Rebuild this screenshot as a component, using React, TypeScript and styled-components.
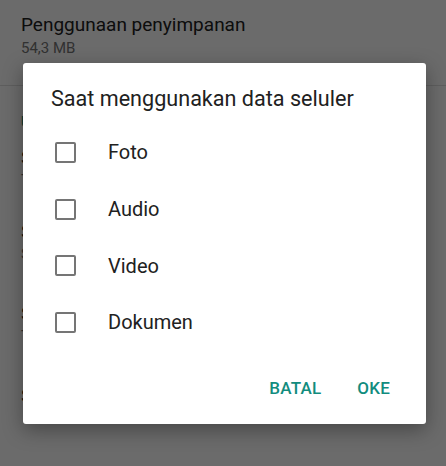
import React from 'react';
import styled, { createGlobalStyle } from 'styled-components';

const GlobalStyle = createGlobalStyle`
  html, body {
    margin: 0;
    padding: 0;
    width: 446px;
    height: 466px;
    overflow: hidden;
    font-family: Roboto, "Liberation Sans", sans-serif;
  }
`;

// Settings screen that sits behind the dim overlay
const Screen = styled.div`
  position: relative;
  width: 446px;
  height: 466px;
  background: #ffffff;
  overflow: hidden;
`;

const SettingItem = styled.div`
  padding: 13px 21px 0;
  display: flex;
  flex-direction: column;
  gap: 1px;
`;

const ItemTitle = styled.div`
  font-size: 19px;
  line-height: 24px;
  color: #212121;
`;

const ItemSub = styled.div`
  font-size: 15px;
  line-height: 20px;
  color: #757575;
`;

const Divider = styled.div`
  height: 1px;
  background: #e0e0e0;
  margin-top: 27px;
`;

const SectionHeader = styled.div`
  padding: 28px 21px 10px;
  font-size: 14px;
  font-weight: 500;
  color: #128c7e;
`;

const ListItem = styled.div<{ $gap?: number }>`
  padding: ${(p) => p.$gap ?? 18}px 21px 0;
  display: flex;
  flex-direction: column;
`;

const Overlay = styled.div`
  position: absolute;
  inset: 0;
  background: rgba(0, 0, 0, 0.58);
  display: flex;
  justify-content: center;
  align-items: flex-start;
  padding: 63px 20px 0 23px;
  box-sizing: border-box;
`;

const Dialog = styled.div`
  width: 403px;
  height: 361px;
  background: #ffffff;
  border-radius: 3px;
  box-shadow: 0 6px 20px rgba(0, 0, 0, 0.35);
  display: flex;
  flex-direction: column;
  box-sizing: border-box;
  padding: 22px 0 0;
`;

const DialogTitle = styled.div`
  padding: 0 28px;
  font-size: 21.6px;
  line-height: 28px;
  color: #212121;
`;

const Options = styled.div`
  display: flex;
  flex-direction: column;
  padding-top: 11px;
`;

const OptionRow = styled.label`
  display: flex;
  align-items: center;
  height: 56.7px;
  padding-left: 32px;
`;

const Box = styled.span`
  width: 17px;
  height: 17px;
  border: 2px solid #757575;
  border-radius: 2px;
  flex: none;
`;

const OptionLabel = styled.span`
  margin-left: 32px;
  font-size: 20px;
  color: #212121;
`;

const Actions = styled.div`
  margin-top: auto;
  display: flex;
  justify-content: flex-end;
  gap: 36px;
  padding: 0 36px 26px 0;
`;

const ActionButton = styled.button`
  border: none;
  background: none;
  padding: 0;
  font-family: inherit;
  font-size: 17px;
  font-weight: 500;
  letter-spacing: 0.2px;
  color: #128c7e;
`;

const options = ['Foto', 'Audio', 'Video', 'Dokumen'];

export default function App() {
  return (
    <>
      <GlobalStyle />
      <Screen>
        <SettingItem>
          <ItemTitle>Penggunaan penyimpanan</ItemTitle>
          <ItemSub>54,3 MB</ItemSub>
        </SettingItem>
        <Divider />
        <SectionHeader>Unduh media otomatis</SectionHeader>
        <ListItem $gap={6}>
          <ItemTitle>Saat menggunakan data seluler</ItemTitle>
          <ItemSub>Tidak ada media</ItemSub>
        </ListItem>
        <ListItem $gap={30}>
          <ItemTitle>Saat terhubung ke Wi-Fi</ItemTitle>
          <ItemSub>Semua media</ItemSub>
        </ListItem>
        <ListItem $gap={38}>
          <ItemTitle>Saat roaming</ItemTitle>
          <ItemSub>Tidak ada media</ItemSub>
        </ListItem>
        <ListItem $gap={38}>
          <ItemTitle>Setel ulang pengaturan unduh otomatis</ItemTitle>
        </ListItem>

        <Overlay>
          <Dialog>
            <DialogTitle>Saat menggunakan data seluler</DialogTitle>
            <Options>
              {options.map((o) => (
                <OptionRow key={o}>
                  <Box />
                  <OptionLabel>{o}</OptionLabel>
                </OptionRow>
              ))}
            </Options>
            <Actions>
              <ActionButton>BATAL</ActionButton>
              <ActionButton>OKE</ActionButton>
            </Actions>
          </Dialog>
        </Overlay>
      </Screen>
    </>
  );
}
